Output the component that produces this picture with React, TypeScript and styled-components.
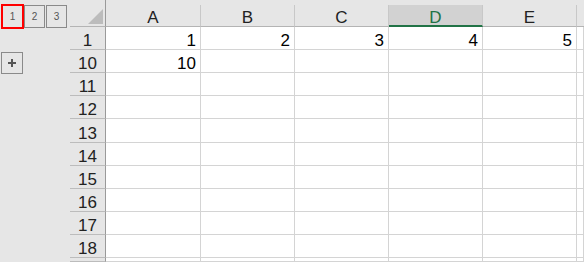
import React from "react";
import styled, { createGlobalStyle } from "styled-components";

const GlobalStyle = createGlobalStyle`
  html, body {
    margin: 0;
    padding: 0;
    background: #e6e6e6;
  }
  body {
    font-family: "Liberation Sans", Arial, sans-serif;
    overflow: hidden;
  }
`;

// Sheet grid: outline pane, row headers, columns A-E, sliver of F
const Sheet = styled.div`
  display: grid;
  grid-template-columns: 70px 36px 95px repeat(4, 94px) 1fr;
  grid-template-rows: 27px repeat(4, 23px) 24px repeat(5, 23px) 1fr;
  width: 584px;
  height: 262px;
  background: #e6e6e6;
`;

const OutlineSlot = styled.div`
  display: flex;
  align-items: flex-start;
  padding-left: 2px;
`;

const LevelGroup = styled.div`
  display: flex;
  gap: 1px;
  margin-top: 5px;
`;

const LevelButton = styled.div<{ $active?: boolean }>`
  width: 21px;
  height: 23px;
  box-sizing: border-box;
  border: 1px solid #8a8a8a;
  display: flex;
  align-items: center;
  justify-content: center;
  font-size: 10px;
  color: #555;
  outline: ${(p) => (p.$active ? "2px solid #f00" : "none")};
  outline-offset: -1px;
`;

const ExpandButton = styled.div`
  width: 22px;
  height: 22px;
  margin-top: 2px;
  margin-left: -1px;
  box-sizing: border-box;
  border: 1px solid #8a8a8a;
  display: flex;
  align-items: center;
  justify-content: center;
`;

const Corner = styled.div`
  border-bottom: 1px solid #b4b4b4;
  border-right: 1px solid #9a9a9a;
  display: flex;
  align-items: flex-end;
  justify-content: flex-end;
  padding: 0 2px 2px 0;
`;

const ColHeader = styled.div<{ $selected?: boolean }>`
  margin-top: 5px;
  border-right: 1px solid #c8c8c8;
  border-bottom: ${(p) => (p.$selected ? "2px solid #217346" : "1px solid #b4b4b4")};
  background: ${(p) => (p.$selected ? "#d2d2d2" : "#e6e6e6")};
  color: ${(p) => (p.$selected ? "#217346" : "#222")};
  font-size: 17px;
  line-height: 14px;
  display: flex;
  align-items: flex-end;
  justify-content: center;
  padding-bottom: ${(p) => (p.$selected ? "0" : "1px")};
`;

const HeaderGap = styled.div`
  border-bottom: 1px solid #b4b4b4;
`;

const RowHeader = styled.div`
  border-right: 1px solid #9a9a9a;
  border-bottom: 1px solid #bcbcbc;
  font-size: 17px;
  line-height: 14px;
  color: #222;
  display: flex;
  align-items: flex-end;
  justify-content: center;
  padding-bottom: 1px;
`;

const Cell = styled.div`
  background: #fff;
  border-right: 1px solid #d4d4d4;
  border-bottom: 1px solid #d4d4d4;
  font-size: 17px;
  line-height: 14px;
  color: #000;
  display: flex;
  align-items: flex-end;
  justify-content: flex-end;
  padding: 0 4px 1px 0;
`;

const columns = ["A", "B", "C", "D", "E"];
// last row is only a sliver at the bottom edge, its label is out of view
const rows: { label: string; values: (number | null)[] }[] = [
  { label: "1", values: [1, 2, 3, 4, 5] },
  { label: "10", values: [10, null, null, null, null] },
  ...["11", "12", "13", "14", "15", "16", "17", "18", ""].map((label) => ({
    label,
    values: [null, null, null, null, null],
  })),
];

const App = () => (
  <>
    <GlobalStyle />
    <Sheet>
      <OutlineSlot>
        <LevelGroup>
          <LevelButton $active>1</LevelButton>
          <LevelButton>2</LevelButton>
          <LevelButton>3</LevelButton>
        </LevelGroup>
      </OutlineSlot>
      <Corner>
        <svg width="15" height="15" viewBox="0 0 15 15">
          <polygon points="15,0 15,15 0,15" fill="#bcbcbc" />
        </svg>
      </Corner>
      {columns.map((c) => (
        <ColHeader key={c} $selected={c === "D"}>
          {c}
        </ColHeader>
      ))}
      <HeaderGap />
      {rows.map((r, idx) => (
        <React.Fragment key={idx}>
          <OutlineSlot>
            {r.label === "10" && (
              <ExpandButton>
                <svg width="8" height="8" viewBox="0 0 8 8">
                  <rect x="0" y="3" width="8" height="2" fill="#555" />
                  <rect x="3" y="0" width="2" height="8" fill="#555" />
                </svg>
              </ExpandButton>
            )}
          </OutlineSlot>
          <RowHeader>{r.label}</RowHeader>
          {r.values.map((v, i) => (
            <Cell key={i}>{v ?? ""}</Cell>
          ))}
          <Cell />
        </React.Fragment>
      ))}
    </Sheet>
  </>
);

export default App;
